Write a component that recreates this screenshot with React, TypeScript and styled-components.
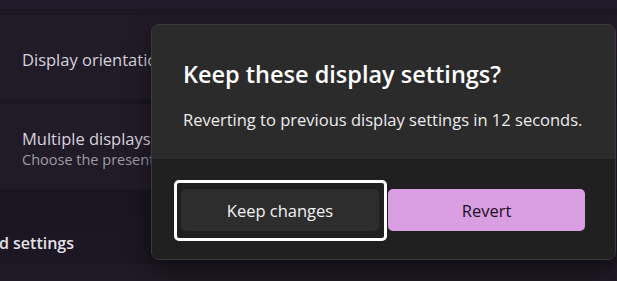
import React from "react";
import styled, { createGlobalStyle } from "styled-components";

const Global = createGlobalStyle`
  html, body { margin: 0; padding: 0; background: #1b1620; }
  body { font-family: "Open Sans", "Noto Sans", sans-serif; }
  * { box-sizing: border-box; }
`;

const Page = styled.div`
  position: relative;
  width: 617px;
  height: 281px;
  overflow: hidden;
  background: linear-gradient(180deg, #1c1721 0%, #1a1520 60%, #1c1722 100%);
  display: flex;
  flex-direction: column;
`;

const TopStrip = styled.div`
  height: 9px;
  background: #211c29;
  flex: none;
`;

const Rows = styled.div`
  display: flex;
  flex-direction: column;
  gap: 5px;
  padding-top: 6px;
`;

const Row = styled.div<{ $h: number }>`
  height: ${(p) => p.$h}px;
  background: #211b28;
  padding: 5px 0 0 22px;
  display: flex;
  flex-direction: column;
  justify-content: center;
`;

const RowTitle = styled.div`
  font-size: 16.5px;
  color: #d6d2da;
  line-height: 22px;
  white-space: nowrap;
`;

const RowSub = styled.div`
  font-size: 14.5px;
  color: #9f9aa5;
  line-height: 20px;
  white-space: nowrap;
`;

const SectionHead = styled.div`
  height: 75px;
  display: flex;
  align-items: center;
  padding-top: 32px;
`;

const HeadClip = styled.div`
  width: 74px;
  overflow: hidden;
  display: flex;
  justify-content: flex-end;
`;

const HeadText = styled.div`
  font-size: 16px;
  font-weight: 600;
  color: #e4e0e8;
  white-space: nowrap;
`;

const BottomRow = styled.div`
  flex: 1;
  background: #1f1a25;
`;

const Dialog = styled.div`
  position: absolute;
  left: 151px;
  top: 24px;
  width: 465px;
  height: 236px;
  border: 1px solid #3a3a3c;
  border-radius: 8px;
  overflow: hidden;
  display: flex;
  flex-direction: column;
  box-shadow: 0 8px 24px rgba(0, 0, 0, 0.45);
`;

const Body = styled.div`
  background: #2b2b2b;
  height: 134px;
  padding: 33px 31px 0;
  flex: none;
`;

const Title = styled.div`
  font-size: 23.5px;
  font-weight: 600;
  color: #ffffff;
  line-height: 32px;
  white-space: nowrap;
`;

const Message = styled.div`
  margin-top: 19px;
  font-size: 16.5px;
  color: #ececec;
  line-height: 22px;
  white-space: nowrap;
`;

const Footer = styled.div`
  flex: 1;
  background: #202020;
  border-top: 1px solid #1c1c1c;
  padding: 29px 0 0 29px;
  display: grid;
  grid-template-columns: 198px 197px;
  column-gap: 9px;
  align-content: start;
`;

const Button = styled.button<{ $accent?: boolean; $focused?: boolean }>`
  position: relative;
  height: 42px;
  border-radius: 5px;
  border: none;
  font-family: inherit;
  font-size: 16.5px;
  cursor: pointer;
  background: ${(p) => (p.$accent ? "#d89ee1" : "#2d2d2d")};
  color: ${(p) => (p.$accent ? "#1b0f1d" : "#f2f2f2")};

  &::after {
    content: "";
    display: ${(p) => (p.$focused ? "block" : "none")};
    position: absolute;
    inset: -9px -8px -10px -7px;
    border: 3.5px solid #ffffff;
    border-radius: 5px;
    pointer-events: none;
  }
`;

export default function App() {
  return (
    <>
      <Global />
      <Page>
        <TopStrip />
        <Rows>
          <Row $h={84}>
            <RowTitle>Display orientation</RowTitle>
          </Row>
          <Row $h={85}>
            <RowTitle>Multiple displays</RowTitle>
            <RowSub>Choose the presentation mode for your displays</RowSub>
          </Row>
        </Rows>
        <SectionHead>
          <HeadClip>
            <HeadText>Related settings</HeadText>
          </HeadClip>
        </SectionHead>
        <BottomRow />
        <Dialog>
          <Body>
            <Title>Keep these display settings?</Title>
            <Message>Reverting to previous display settings in 12 seconds.</Message>
          </Body>
          <Footer>
            <Button $focused>Keep changes</Button>
            <Button $accent>Revert</Button>
          </Footer>
        </Dialog>
      </Page>
    </>
  );
}
